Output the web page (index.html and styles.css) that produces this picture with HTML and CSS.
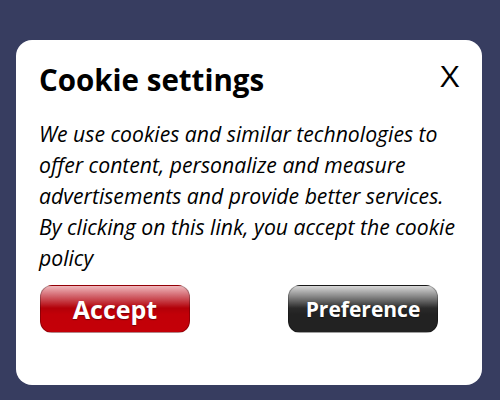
FILE: index.html
```html
<!DOCTYPE html>
<html>
<head>
<meta charset="utf-8">
<link rel="stylesheet" href="styles.css">
</head>
<body>
<div class="card">
  <div class="header">
    <h1 class="title">Cookie settings</h1>
    <span class="close">X</span>
  </div>
  <p class="text">We use cookies and similar technologies to offer content, personalize and measure advertisements and provide better services. By clicking on this link, you accept the cookie policy</p>
  <div class="actions">
    <button class="btn btn-accept">Accept</button>
    <button class="btn btn-pref">Preference</button>
  </div>
</div>
</body>
</html>
```
FILE: styles.css
```css
html, body {
  margin: 0;
  padding: 0;
  background: #373d60;
  width: 500px;
  height: 400px;
  overflow: hidden;
}
body {
  font-family: "Open Sans", sans-serif;
  color: #000;
}
.card {
  box-sizing: border-box;
  margin: 40px 18px 0 16px;
  height: 345px;
  background: #fff;
  border-radius: 16px;
  padding: 20px 22px 0 23px;
}
.header {
  display: flex;
  justify-content: space-between;
  align-items: flex-start;
}
.title {
  margin: 0;
  font-size: 29.5px;
  font-weight: 700;
  line-height: 40px;
}
.close {
  font-size: 30px;
  line-height: 40px;
  margin-top: -4px;
  margin-right: 2px;
  transform: scaleX(1.1);
}
.text {
  margin: 18px 0 0 0;
  font-style: italic;
  font-size: 21.2px;
  line-height: 31px;
}
.actions {
  display: flex;
  justify-content: space-between;
  margin-top: 12px;
  padding: 0 22px 0 1px;
}
.btn {
  width: 150px;
  height: 48px;
  border-radius: 12px;
  border: 1px solid rgba(0,0,0,0.25);
  font-family: "Open Sans", sans-serif;
  font-weight: 700;
  color: #fff;
  padding: 0;
  text-shadow: 0 1px 1px rgba(0,0,0,0.4);
}
.btn-accept {
  font-size: 25px;
  background: linear-gradient(to bottom, #f0b8bc 0%, #d46a72 20%, #b30008 48%, #c20008 62%, #c40008 100%);
}
.btn-pref {
  font-size: 21px;
  background: linear-gradient(to bottom, #d8d8d8 0%, #8a8a8a 22%, #2a2a2a 48%, #222 62%, #222 100%);
}
```
